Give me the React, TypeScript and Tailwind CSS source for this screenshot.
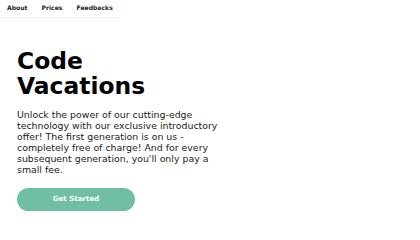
import React from "react";

const links = ["About", "Prices", "Feedbacks"];

const App: React.FC = () => {
  return (
    <div className="min-h-screen w-full bg-white font-['DejaVu_Sans',sans-serif] text-[#111]">
      <nav className="flex w-[120px] h-[18px] items-center border-b border-[#f1f1f1] px-[7px] gap-[14px]">
        {links.map((link) => (
          <a
            key={link}
            href="#"
            className="text-[6.1px] font-bold leading-none text-[#1b1b1b]"
          >
            {link}
          </a>
        ))}
      </nav>

      <main className="flex flex-col px-[17px] pt-[31px]">
        <h1 className="w-[180px] text-[23.4px] font-bold leading-[25px] text-black">
          Code Vacations
        </h1>

        <p className="mt-[10px] w-[205px] text-[9.4px] leading-[11px] text-[#222]">
          Unlock the power of our cutting-edge technology with our exclusive
          introductory offer! The first generation is on us - completely free
          of charge! And for every subsequent generation, you'll only pay a
          small fee.
        </p>

        <button className="mt-[13px] flex h-[23px] w-[118px] items-center justify-center rounded-full bg-[#6fbea5] text-[7.1px] font-bold text-white">
          Get Started
        </button>
      </main>
    </div>
  );
};

export default App;
